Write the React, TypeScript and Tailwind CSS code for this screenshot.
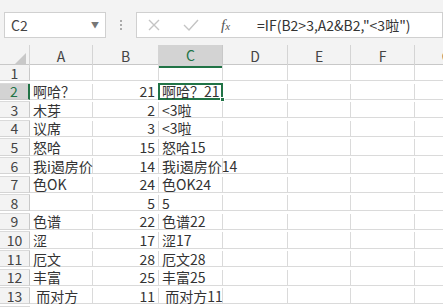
import React from 'react'

const cols = ['A', 'B', 'C', 'D', 'E', 'F', 'G']

const rows: [string, string, string][] = [
  ['', '', ''],
  ['啊哈？', '21', '啊哈？21'],
  ['木芽', '2', '<3啦'],
  ['议席', '3', '<3啦'],
  ['怒哈', '15', '怒哈15'],
  ['我i遏房价', '14', '我i遏房价14'],
  ['色OK', '24', '色OK24'],
  ['', '5', '5'],
  ['色谱', '22', '色谱22'],
  ['涩', '17', '涩17'],
  ['厄文', '28', '厄文28'],
  ['丰富', '25', '丰富25'],
  [' 而对方', '11', ' 而对方11'],
]

const grid = 'grid grid-cols-[30px_63px_66px_64px_65px_63px_64px_64px] w-[479px]'

export default function App() {
  return (
    <div
      className="w-[443px] h-[307px] overflow-hidden bg-white text-[#333]"
      style={{ fontFamily: '"Noto Sans CJK SC", "Liberation Sans", sans-serif' }}
    >
      {/* 编辑栏 */}
      <div className="h-[45px] bg-[#f3f3f3] flex items-start pt-[12px] pl-[4px]">
        <div className="w-[102px] h-[26px] bg-white border border-[#d0d0d0] flex items-center justify-between pl-[6px] pr-[6px]">
          <span className="text-[14px] text-[#444]">C2</span>
          <span className="text-[8px] text-[#777] leading-none">▼</span>
        </div>
        <div className="w-[30px] h-[26px] flex flex-col items-center justify-center gap-[2px]">
          <span className="w-[2px] h-[2px] bg-[#aaa]"></span>
          <span className="w-[2px] h-[2px] bg-[#aaa]"></span>
          <span className="w-[2px] h-[2px] bg-[#aaa]"></span>
        </div>
        <div className="flex-1 h-[26px] bg-white border border-[#d0d0d0] flex items-center">
          <svg width="12" height="12" viewBox="0 0 12 12" className="ml-[11px]">
            <path d="M1 1 L11 11 M11 1 L1 11" stroke="#c4c4c4" strokeWidth="1.4" fill="none" />
          </svg>
          <svg width="16" height="14" viewBox="0 0 16 14" className="ml-[23px]">
            <path d="M1 7 L6 12 L15 2" stroke="#c4c4c4" strokeWidth="1.4" fill="none" />
          </svg>
          <span
            className="ml-[22px] text-[15px] italic text-[#555]"
            style={{ fontFamily: '"Liberation Serif", serif' }}
          >
            f<span className="text-[11px]">x</span>
          </span>
          <span className="ml-[27px] text-[14px] text-[#333] whitespace-nowrap">=IF(B2&gt;3,A2&amp;B2,"&lt;3啦")</span>
        </div>
      </div>

      {/* 列标题 */}
      <div className={`${grid} h-[20px] bg-[#f3f3f3] border-b border-[#c8c8c8]`}>
        <div className="border-r border-[#d4d4d4] relative">
          <svg width="12" height="12" viewBox="0 0 12 12" className="absolute right-[3px] bottom-[3px]">
            <path d="M12 0 L12 12 L0 12 Z" fill="#c8c8c8" />
          </svg>
        </div>
        {cols.map((c) => (
          <div
            key={c}
            className={
              c === 'C'
                ? 'flex items-center justify-center text-[14px] bg-[#d3d3d3] text-[#217346] border-r border-[#c8c8c8] border-b-2 border-b-[#217346]'
                : 'flex items-center justify-center text-[14px] text-[#444] border-r border-[#d4d4d4]'
            }
          >
            {c}
          </div>
        ))}
      </div>

      {/* 行 */}
      {rows.map((r, i) => {
        const n = i + 1
        const sel = n === 2
        return (
          <div key={n} className={`${grid} h-[18.6px] text-[14px] leading-none`}>
            <div
              className={
                sel
                  ? 'flex items-center justify-center bg-[#d3d3d3] text-[#217346] border-r-2 border-r-[#217346] border-b border-[#c8c8c8]'
                  : 'flex items-center justify-center bg-[#f3f3f3] text-[#444] border-r border-[#c8c8c8] border-b border-b-[#d4d4d4]'
              }
            >
              {n}
            </div>
            <div className="border-r border-b border-[#dadada] flex items-center pl-[3px] whitespace-pre">
              {r[0]}
            </div>
            <div className="border-r border-b border-[#dadada] flex items-center justify-end pr-[3px]">
              {r[1]}
            </div>
            <div className="relative border-r border-b border-[#dadada] flex items-center pl-[3px] whitespace-pre overflow-visible">
              <span className="relative z-10">{r[2]}</span>
              {sel && (
                <div className="absolute -left-px -top-px -right-px -bottom-px border-2 border-[#217346] pointer-events-none">
                  <div className="absolute -right-[4px] -bottom-[4px] w-[5px] h-[5px] bg-[#217346] border border-white"></div>
                </div>
              )}
            </div>
            <div className="border-r border-b border-[#dadada]"></div>
            <div className="border-r border-b border-[#dadada]"></div>
            <div className="border-r border-b border-[#dadada]"></div>
            <div className="border-r border-b border-[#dadada]"></div>
            <div className="border-b border-[#dadada]"></div>
          </div>
        )
      })}
    </div>
  )
}
